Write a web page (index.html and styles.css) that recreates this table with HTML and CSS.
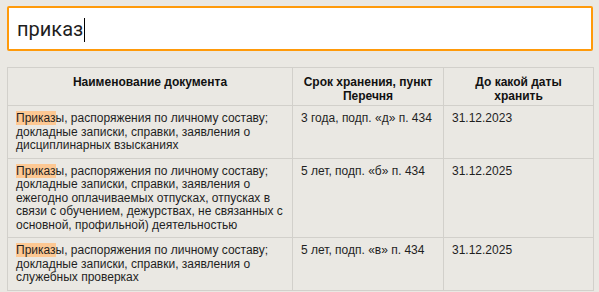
FILE: index.html
```
<!DOCTYPE html>
<html lang="ru">
<head>
<meta charset="utf-8">
<link rel="stylesheet" href="styles.css">
</head>
<body>
<div class="page">
  <div class="search"><span class="query">приказ</span><span class="caret"></span></div>
  <table class="docs">
    <colgroup><col class="c1"><col class="c2"><col class="c3"></colgroup>
    <thead>
      <tr><th>Наименование документа</th><th>Срок хранения, пункт Перечня</th><th>До какой даты хранить</th></tr>
    </thead>
    <tbody>
      <tr>
        <td><mark>Приказ</mark>ы, распоряжения по личному составу; докладные записки, справки, заявления о дисциплинарных взысканиях</td>
        <td>3 года, подп. «д» п. 434</td>
        <td>31.12.2023</td>
      </tr>
      <tr>
        <td><mark>Приказ</mark>ы, распоряжения по личному составу; докладные записки, справки, заявления о ежегодно оплачиваемых отпусках, отпусках в связи с обучением, дежурствах, не связанных с основной, профильной) деятельностью</td>
        <td>5 лет, подп. «б» п. 434</td>
        <td>31.12.2025</td>
      </tr>
      <tr>
        <td><mark>Приказ</mark>ы, распоряжения по личному составу; докладные записки, справки, заявления о служебных проверках</td>
        <td>5 лет, подп. «в» п. 434</td>
        <td>31.12.2025</td>
      </tr>
    </tbody>
  </table>
</div>
</body>
</html>
```
FILE: styles.css
```
html, body {
  margin: 0;
  background: #eae8e3;
}
.page {
  padding: 6px 7px 0 7px;
  width: 586px;
}
.search {
  box-sizing: border-box;
  height: 45px;
  border: 2px solid #ff9a0a;
  border-radius: 2px;
  background: #fff;
  padding: 0 8px;
  display: flex;
  align-items: center;
  font-family: Roboto, "Open Sans", sans-serif;
  font-size: 20px;
  color: #1e1e1e;
}
.caret {
  display: inline-block;
  width: 1px;
  height: 24px;
  background: #000;
  margin-left: 1px;
  margin-top: 3px;
}
.docs {
  margin-top: 16px;
  width: 586px;
  border-collapse: collapse;
  table-layout: fixed;
  font-family: "Liberation Sans", Arial, sans-serif;
  font-size: 12px;
  color: #1f1f1f;
}
.c1 { width: 285px; }
.c2 { width: 151px; }
.c3 { width: 150px; }
.docs th, .docs td {
  border: 1px solid #d2d0cb;
  vertical-align: top;
  line-height: 13.5px;
}
.docs th {
  font-weight: bold;
  text-align: center;
  padding: 8px 8px 2px;
  color: #111;
}
.docs td {
  padding: 6px 8px 5px;
  text-align: left;
}
mark {
  background: #fdc893;
  color: inherit;
}
```
